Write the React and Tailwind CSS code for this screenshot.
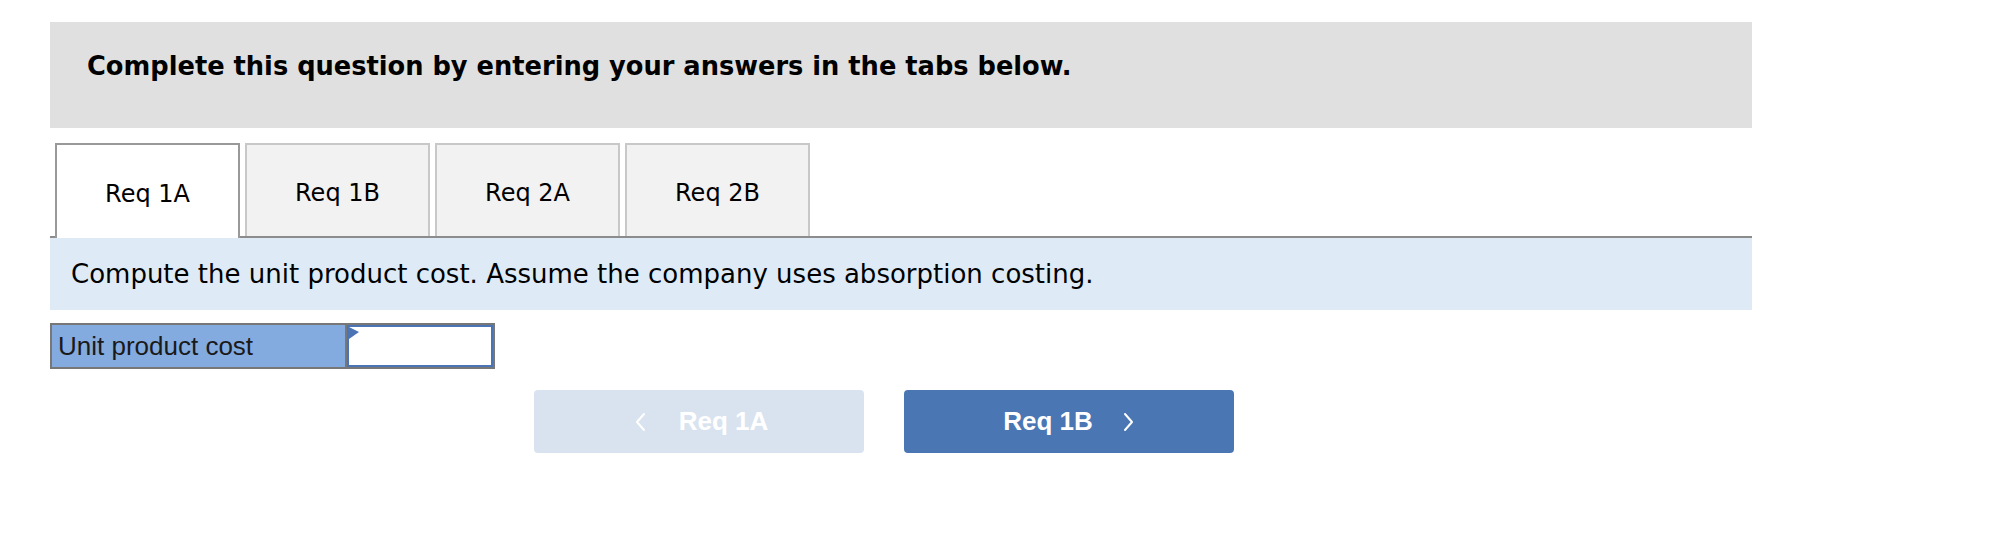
import React from 'react';

const tabs = ['Req 1A', 'Req 1B', 'Req 2A', 'Req 2B'];

function Chevron({ dir }) {
  return (
    <svg viewBox="0 0 12 20" className="w-[12px] h-[20px]" fill="none" stroke="currentColor" strokeWidth="2" strokeLinecap="round" strokeLinejoin="round">
      {dir === 'left' ? <path d="M10 2 L3 10 L10 18" /> : <path d="M2 2 L9 10 L2 18" />}
    </svg>
  );
}

export default function App() {
  return (
    <div className="w-[1992px] h-[536px] bg-white pt-[22px] pl-[50px]">
      <div className="w-[1702px]">
        <div className="h-[106px] bg-[#e0e0e0] pt-[29px] pl-[37px]">
          <h2 className="font-['DejaVu_Sans',Verdana,sans-serif] font-bold text-[25.7px] leading-[30px] text-black">
            Complete this question by entering your answers in the tabs below.
          </h2>
        </div>

        <div className="mt-[15px] flex items-end gap-[5px] pl-[5px] border-b-2 border-[#8c8c8c] font-['DejaVu_Sans',Verdana,sans-serif] text-[24px] text-black">
          {tabs.map((t, i) =>
            i === 0 ? (
              <div
                key={t}
                className="w-[185px] h-[95px] -mb-[2px] border-2 border-b-0 border-[#999999] bg-white flex items-center justify-center pt-[4px]"
              >
                {t}
              </div>
            ) : (
              <div
                key={t}
                className="w-[185px] h-[93px] border-2 border-b-0 border-[#c8c8c8] bg-[#f2f2f2] flex items-center justify-center pt-[4px]"
              >
                {t}
              </div>
            )
          )}
        </div>

        <div className="h-[72px] bg-[#deebf7] flex items-center pl-[21px] font-['DejaVu_Sans',Verdana,sans-serif] text-[26px] text-black">
          Compute the unit product cost. Assume the company uses absorption costing.
        </div>

        <div className="mt-[13px] flex w-[445px] h-[46px] border-2 border-[#777777] font-['Liberation_Sans',Arial,sans-serif] text-[26px] text-[#1a1a1a]">
          <div className="w-[295px] bg-[#84abdf] flex items-center pl-[6px] border-r-2 border-[#777777]">
            Unit product cost
          </div>
          <div className="relative flex-1 bg-white border-2 border-[#4a74b4]">
            <svg viewBox="0 0 10 12" className="absolute left-0 top-0 w-[10px] h-[12px]">
              <polygon points="0,0 10,5 0,12" fill="#4a74b4" />
            </svg>
          </div>
        </div>

        <div className="mt-[21px] pl-[484px] flex gap-[40px] font-['Liberation_Sans',Arial,sans-serif] font-bold text-[26px] text-white">
          <div className="w-[330px] h-[63px] rounded-[4px] bg-[#d9e3ef] flex items-center justify-center gap-[33px] pl-[4px]">
            <Chevron dir="left" />
            <span>Req 1A</span>
          </div>
          <div className="w-[330px] h-[63px] rounded-[4px] bg-[#4a76b4] flex items-center justify-center gap-[30px]">
            <span>Req 1B</span>
            <Chevron dir="right" />
          </div>
        </div>
      </div>
    </div>
  );
}
